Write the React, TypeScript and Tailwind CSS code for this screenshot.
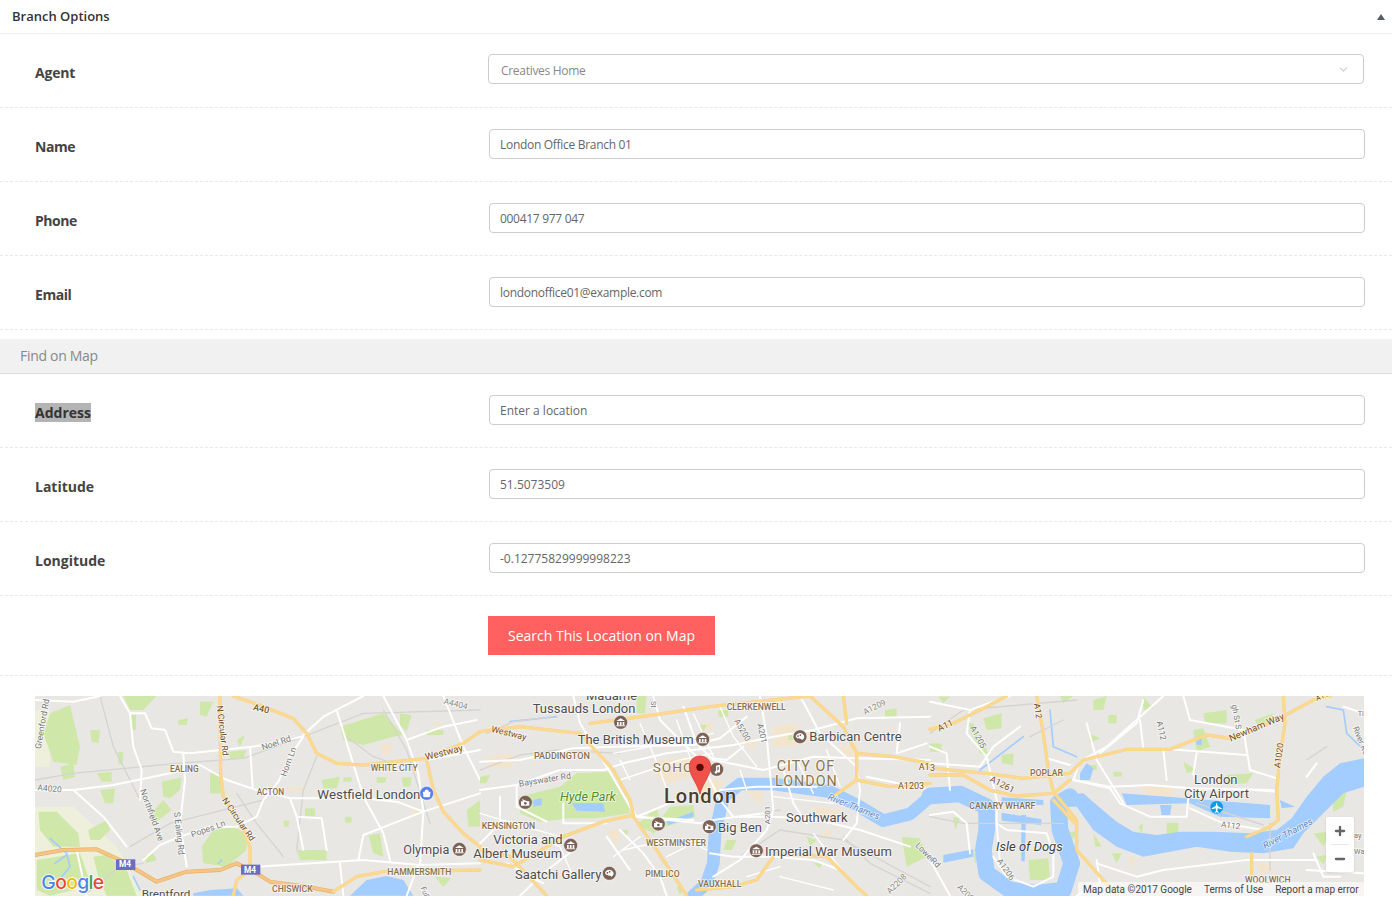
import React from 'react';
import { ChevronDown, Minus, Plus } from 'lucide-react';

const PARK = '#cfe8a9';
const WATER = '#a3ccff';
const TAN = '#f3e5cd';
const HIGHWAY = '#fcd98f';
const MOTORWAY = '#f7c583';

// every map shape below is written in 3x crop coordinates, one group per crop
type Panel = {
  x: number;
  pale: string[];
  parks: string[];
  tan: string[];
  water: string[];
  rivers: string[];
  streams: string[];
  minor: string[];
  roads: string[];
  fine: string[];
  highways: string[];
  motorways: string[];
};

const panels: Panel[] = [
  {
    x: 30,
    pale: ['15,350 130,350 260,470 340,617 15,617', '15,60 60,60 60,230 15,230'],
    parks: [
      '280,18 380,18 340,60 300,60',
      '60,70 120,45 150,170 140,225 70,215 40,130',
      '90,230 130,220 135,260 100,270',
      '300,75 318,75 318,120 302,120',
      '180,120 210,120 205,160 185,155',
      '265,185 280,185 278,225 265,220',
      '200,250 245,245 245,275 215,275',
      '395,275 455,262 450,300 420,325 400,320',
      '540,250 575,250 575,310 540,310',
      '210,300 255,295 250,340 225,340',
      '355,380 400,330 425,360 380,395',
      '510,35 550,35 530,80 510,75',
      '445,90 475,85 470,105 445,105',
      '620,150 645,135 630,170',
      '595,185 650,180 640,205 600,208',
      '930,110 1060,70 1120,135 1090,140 1000,165 940,150',
      '1110,70 1145,75 1130,125 1110,105',
      '875,270 930,260 920,295 880,295',
      '940,262 965,262 965,275 940,275',
      '1040,262 1070,262 1065,278 1040,278',
      '1115,262 1145,262 1140,290 1120,290',
      '1310,360 1350,330 1350,410 1315,410',
      '825,355 855,355 855,380 825,380',
      '945,380 965,380 965,398 945,398',
      '760,392 778,392 775,412 762,408',
      '1015,435 1050,430 1060,500 1030,490',
      '550,420 610,410 650,430 650,480 590,530 520,520 515,470',
      '800,480 890,480 890,510 810,510',
      '25,365 80,365 145,430 150,470 70,470 30,420',
      '175,420 230,390 240,420 210,450 180,450',
      '20,510 80,500 150,490 175,560 130,600 60,617 20,600',
      '190,500 230,495 290,540 320,617 230,617 205,560',
      '340,500 370,490 380,510 350,520',
      '1190,120 1240,120 1240,135 1190,135',
      '1215,560 1265,565 1240,590',
    ],
    tan: ['1050,165 1085,160 1085,190 1060,195', '770,295 825,292 825,302 770,306', '1145,350 1165,350 1165,380 1150,380', '1205,95 1240,100 1230,115'],
    water: ['960,617 1010,570 1070,558 1120,570 1150,617', '490,610 540,600 620,595 640,617 490,617'],
    rivers: [],
    streams: ['60,445 110,490 120,530 95,560', '110,495 75,520', '310,560 330,600', '575,510 565,520'],
    minor: [
      '15,270 130,250 420,222 640,205 820,140 1000,70 1350,60',
      '300,470 420,400 620,350 700,330',
      '620,310 680,400 760,500',
      '210,18 250,170 330,330',
      '1060,60 1130,180 1200,400',
      '860,200 820,300 800,480',
      '950,140 1030,200 1090,220',
      '170,610 270,530 340,520',
    ],
    roads: [
      '15,30 130,35 210,18',
      '270,18 300,70 345,70 365,115 405,120 430,185 480,190 665,170 700,165 815,140 880,80 1000,18',
      '300,70 310,170 335,240 330,330',
      '130,300 250,285 420,250 510,225 590,270 680,300 720,310 780,325 1000,325 1100,335 1180,365',
      '15,300 130,300 220,380 290,470',
      '460,190 465,270 450,400 470,530',
      '660,170 668,290',
      '820,140 780,200 745,275 700,330 680,380 620,410 540,410 450,440 390,465 340,510',
      '780,325 800,380 820,480',
      '800,380 875,385 890,480',
      '680,530 1000,510 1170,525 1350,520',
      '985,510 1000,435 1180,365 1350,310',
      '920,60 960,190 1000,320 1060,430 1080,510',
      '1060,18 1130,150 1165,250 1180,365 1170,525',
      '1240,18 1300,170 1350,270',
      '1130,150 1240,110 1340,90',
      '1165,525 1130,617',
      '1190,210 1350,180',
      '140,480 170,617',
      '930,520 940,617',
    ],
    fine: [],
    highways: [
      '610,18 700,50 790,85 830,130 860,190 920,220 1000,225 1190,205 1300,160 1350,125',
      '570,18 572,250 580,320 640,420 660,470 660,540 620,570 610,617',
      '1190,210 1210,300 1240,365 1300,430 1350,470',
      '910,605 980,560 1060,545 1350,540',
    ],
    motorways: ['15,495 100,480 200,478 270,510 380,575 470,545 570,540 620,520 680,550 720,575 830,590 910,605'],
  },
  {
    x: 480,
    pale: [],
    parks: [
      '240,290 290,250 390,245 440,330 450,370 350,385 270,385 180,395 120,370 115,320',
      '470,18 500,18 495,70 470,70',
      '470,405 530,350 540,390 570,350 640,345 645,380 560,410 520,430',
      '925,130 945,130 945,150 925,150',
      '715,60 745,60 745,80 715,80',
      '740,450 770,450 755,480 730,480',
      '0,260 30,255 20,280 0,280',
      '1215,60 1250,55 1250,80 1215,80',
      '1265,440 1320,445 1340,500 1280,530',
      '425,420 445,420 440,440',
      '980,440 1010,450 990,470',
      '1000,520 1030,515 1020,535',
      '590,590 610,590 600,617',
      '660,105 680,105 670,125',
    ],
    tan: [
      '530,210 640,200 650,250 570,280 530,260',
      '660,100 700,100 690,130',
      '650,270 730,270 710,330 640,340',
      '780,150 830,145 820,180',
      '880,110 950,100 950,170 880,170',
      '1080,170 1130,160 1140,205 1090,205',
      '1000,350 1080,360 1060,395 1000,395',
      '20,200 100,190 95,235 30,235',
      '380,420 420,420 410,470',
      '795,300 850,300 840,345',
      '1020,420 1060,420 1040,450',
    ],
    water: [
      '160,330 185,325 185,345 160,350',
      '275,340 370,340 375,365 290,362',
      '560,395 640,365 640,380 565,405',
    ],
    rivers: ['1350,320 1290,372 1210,392 1130,345 1050,305 880,282 780,282 730,320 705,430 700,520 680,580 640,617'],
    streams: ['90,95 230,80'],
    minor: [
      '0,240 120,195 230,180 420,190',
      '780,500 900,420 1090,450 1350,590',
      '780,380 900,360',
      '1090,440 1170,520 1350,610',
      '20,130 100,95 220,80',
    ],
    roads: [
      '0,300 110,285 240,240 370,240 430,220 560,190 760,165 880,140 1000,120 1130,85 1350,80',
      '0,215 120,210 280,175 400,170 640,165 720,145 800,80',
      '280,18 300,100 380,230 450,350 470,380 660,400 700,390 850,370',
      '520,18 540,90 660,210 720,330 760,380 860,380 990,385 1140,420 1290,470',
      '610,50 650,160 700,210 850,240 1000,200 1130,205 1350,210',
      '110,285 110,350 200,395',
      '60,320 60,400 0,460',
      '840,18 860,140 880,360 860,420 780,510 700,560',
      '960,18 1020,130 1130,230 1140,300 1130,400 1090,450',
      '1160,260 1350,300',
      '380,400 250,400 250,340',
      '420,420 490,490 540,560 560,617',
      '380,440 450,540',
      '690,490 760,500 880,500 1000,510 1080,540 1160,617',
      '720,300 830,290 1010,290',
      '910,240 940,340 980,400',
      '1260,100 1250,190 1340,160',
      '590,330 520,360 470,380',
      '280,480 190,550 120,617',
      '80,520 190,580',
      '700,205 740,210 790,170',
      '460,380 640,390',
    ],
    fine: [
      '400,190 560,160 700,130',
      '420,270 600,210 700,190',
      '480,100 540,240 560,300',
      '590,90 640,230 660,290',
      '640,70 700,200',
      '420,210 450,270',
      '720,50 760,140 830,230',
      '780,240 800,300',
      '950,210 1000,310',
      '1040,180 1080,290',
      '880,320 1060,340',
      '430,480 560,450',
      '400,500 480,440',
      '1000,430 1100,560',
      '900,560 1060,600',
      '800,560 900,530',
      '560,500 640,460 680,480',
      '150,440 240,470 280,560',
      '0,370 100,400 240,440',
    ],
    highways: [
      '0,125 120,110 300,130',
      '330,100 520,75 690,50 830,35 990,18',
      '300,130 400,240 450,330 460,375 370,395 250,440 100,530 0,510',
      '460,380 530,480 620,617',
      '990,18 1090,110 1130,190 1130,270 1060,320',
      '1130,190 1240,200 1350,220',
      '1130,270 1230,290 1350,280',
      '880,490 1040,500 1130,590 1160,617',
      '880,500 830,570 760,590 650,600',
      '1090,18 1100,100',
      '0,480 90,500 200,617',
    ],
    motorways: [],
  },
  {
    x: 930,
    pale: [],
    parks: [
      '490,30 530,18 520,60 490,60',
      '640,20 670,55 640,60',
      '535,75 560,75 560,100 535,100',
      '160,85 215,70 215,115 170,120',
      '475,130 510,145 480,160',
      '790,120 820,115 840,170 800,185',
      '820,70 890,60 890,100 825,100',
      '975,90 1030,70 1020,105 985,115',
      '215,195 250,190 250,225 215,220',
      '0,160 35,160 35,185 0,185',
      '110,100 130,100 180,200 150,190',
      '550,245 575,245 575,260 550,260',
      '760,215 800,240 770,250',
      '890,255 970,250 950,280 890,285',
      '475,225 500,225 500,240 480,240',
      '710,398 745,398 745,430 710,430',
      '625,410 640,400 635,430',
      '490,430 515,470 495,470',
      '295,510 355,505 360,570 300,570',
      '408,425 440,425 430,450',
      '70,380 90,385 75,420',
      '1205,310 1250,300 1240,350 1210,365',
      '1150,430 1200,425 1180,470',
      '1160,500 1190,495 1180,525',
      '25,20 60,20 40,40',
      '390,18 430,18 400,40',
      '545,490 575,490 560,520',
      '130,490 150,495 135,520',
    ],
    tan: ['630,290 730,290 725,320 650,320', '980,520 1020,520 1030,545 990,550', '595,500 615,500 605,540'],
    water: [
      '1302,205 1230,220 1180,260 1130,320 1085,385 1040,420 960,430 850,425 750,425 680,435 610,425 560,395 500,345 460,310 400,315 400,350 440,350 490,420 560,470 640,500 800,470 900,485 1000,490 1090,475 1120,430 1180,370 1240,310 1302,290',
      '575,310 770,325 1020,345 1020,385 870,380 780,340 590,345',
      '690,345 725,345 720,375 695,375',
      '1050,330 1095,350 1055,355',
      '215,322 340,330 340,345 215,340',
      '215,368 335,388 333,405 215,392',
      '274,375 288,375 284,515 274,512',
      '40,495 130,478 130,500 40,518',
      '450,250 470,220 490,235 480,270 450,270',
      '800,145 815,145 815,165 800,165',
    ],
    rivers: ['0,318 90,312 170,350 170,420 160,480 170,550 240,600 320,610 400,600 425,520 390,420 385,340 420,320'],
    streams: ['360,60 370,170 440,200', '1190,50 1240,60 1250,130 1302,180', '150,240 280,140'],
    minor: [
      '0,130 100,60 440,30',
      '400,90 300,140',
      '0,380 100,400 400,400',
      '800,340 1000,405',
      '1020,400 1020,540',
      '1130,210 1190,170',
    ],
    roads: [
      '0,35 120,60 240,18',
      '120,60 110,130 170,200 200,330 200,400 230,420 350,430 370,490 370,560 310,590 230,560 190,500',
      '270,110 190,170 150,230 0,220',
      '0,170 50,190 60,300',
      '700,18 530,170 450,215 430,270 540,295 570,340 660,380 770,380 775,320',
      '430,270 540,290 660,285 780,295 1030,300',
      '780,355 880,400 1000,420',
      '630,90 640,175',
      '700,180 710,270',
      '470,100 500,210 580,340',
      '640,30 620,100 510,190',
      '760,18 780,90 940,120 960,240 1040,265',
      '720,178 950,195',
      '800,190 790,250 800,280',
      '500,520 620,560 700,540 950,510 1160,510',
      '500,510 510,580 440,617',
      '0,375 70,365 110,400 120,490',
      '0,510 60,617',
      '200,400 210,520',
      '1130,540 1300,550',
      '1150,490 1180,560 1230,560',
      '1160,220 1130,260',
      '350,205 420,225',
      '1240,50 1302,70',
      '970,300 1040,305',
    ],
    fine: [],
    highways: [
      '0,118 70,100 170,50 230,18',
      '320,18 340,130 355,240 370,305 440,390 440,480 520,570 560,617',
      '0,232 60,240 170,250 280,265 420,250 460,210 590,178 720,178 830,135 900,145 1050,85 1150,30 1200,18',
      '0,255 100,255 180,300 260,318 370,310 420,270',
      '1060,18 1065,100 1050,200 1040,300 1045,390 1020,410 950,440',
      '965,490 965,560',
      '370,330 435,400',
    ],
    motorways: [],
  },
];

type LabelProps = {
  x: number;
  y: number;
  s: number;
  c?: string;
  r?: number;
  w?: number;
  i?: boolean;
  sp?: number;
  children: string;
};

function Label({ x, y, s, c = '#5c5c5c', r = 0, w = 400, i = false, sp = 0, children }: LabelProps) {
  return (
    <text
      x={x}
      y={y}
      fontSize={s}
      fill={c}
      fontWeight={w}
      fontStyle={i ? 'italic' : 'normal'}
      letterSpacing={sp}
      stroke="#ffffff"
      strokeOpacity={0.7}
      strokeWidth={5}
      paintOrder="stroke"
      transform={r ? `rotate(${r} ${x} ${y})` : undefined}
    >
      {children}
    </text>
  );
}

function Poi({ x, y, kind = 'museum', c = '#7b6156' }: { x: number; y: number; kind?: string; c?: string }) {
  return (
    <g transform={`translate(${x} ${y})`}>
      <circle r={21} fill={c} stroke="#ffffff" strokeOpacity={0.6} strokeWidth={3} />
      {kind === 'museum' && <path d="M-13 -4 L0 -12 L13 -4 Z M-11 -1 H-6 V8 H-11 Z M-2.5 -1 H2.5 V8 H-2.5 Z M6 -1 H11 V8 H6 Z M-13 9 H13 V12 H-13 Z" fill="#fff" />}
      {kind === 'photo' && (
        <>
          <path d="M-13 -3 H-7 L-10 -10 L-2 -6 L6 -3 H12 V10 H-13 Z" fill="#fff" />
          <circle cx="0" cy="3" r="4" fill={c} />
        </>
      )}
      {kind === 'music' && <path d="M-2 -11 L10 -14 V6 A4 4 0 1 1 6 2 V-8 L2 -7 V9 A4 4 0 1 1 -2 5 Z" fill="#fff" />}
      {kind === 'shop' && <path d="M-11 -4 H11 L9 11 H-9 Z M-6 -4 A6 7 0 0 1 6 -4" fill="#fff" stroke="#fff" strokeWidth={1} />}
      {kind === 'art' && <path d="M-13 -1 A13 11 0 1 1 6 10 C2 3 -7 12 -13 -1 Z M-6 -4 A2.5 2.5 0 1 0 -5.9 -4 M1 -7 A2.5 2.5 0 1 0 1.1 -7" fill="#fff" />}
    </g>
  );
}

function MapArt() {
  return (
    <svg viewBox="35 696 1329 200" className="block h-full w-full" fontFamily="Roboto, sans-serif">
      <rect x="35" y="696" width="1329" height="200" fill="#e9e7e4" />
      <g className="blur-[0.35px]">
        {panels.map((p) => (
          <g key={p.x} transform={`translate(${p.x} 690) scale(0.33334)`} strokeLinejoin="round" strokeLinecap="round" fill="none">
            {p.pale.map((d) => <polygon key={d} points={d} fill="#eef0dc" />)}
            {p.tan.map((d) => <polygon key={d} points={d} fill={TAN} />)}
            {p.parks.map((d) => <polygon key={d} points={d} fill={PARK} />)}
            {p.water.map((d) => <polygon key={d} points={d} fill={WATER} />)}
            {p.rivers.map((d) => <polyline key={d} points={d} stroke={WATER} strokeWidth={p.x === 930 ? 50 : 38} />)}
            {p.streams.map((d) => <polyline key={d} points={d} stroke={WATER} strokeWidth={5} />)}
            {p.minor.map((d) => <polyline key={d} points={d} stroke="#d6d4d0" strokeWidth={4} />)}
            {p.fine.map((d) => <polyline key={d} points={d} stroke="#ffffff" strokeWidth={4} />)}
            {p.roads.map((d) => <polyline key={d} points={d} stroke="#ffffff" strokeWidth={6} />)}
            {p.motorways.map((d) => <polyline key={d} points={d} stroke="#e6b06a" strokeWidth={12} />)}
            {p.motorways.map((d) => <polyline key={d} points={d} stroke={MOTORWAY} strokeWidth={8} />)}
            {p.highways.map((d) => <polyline key={d} points={d} stroke="#f2d08a" strokeWidth={10} />)}
            {p.highways.map((d) => <polyline key={d} points={d} stroke={HIGHWAY} strokeWidth={8} />)}
          </g>
        ))}
      </g>

      <g transform="translate(30 691) scale(0.33334)">
        <Label x={668} y={56} s={27} c="#7a5a22" r={14} w={500}>A40</Label>
        <Label x={1240} y={38} s={25} c="#8a8a8a" r={14}>A4404</Label>
        <Label x={32} y={175} s={26} c="#777" r={-80}>Greenford Rd</Label>
        <Label x={560} y={45} s={26} c="#6e4a1a" r={83}>N Circular Rd</Label>
        <Label x={698} y={178} s={26} c="#777" r={-18}>Noel Rd</Label>
        <Label x={768} y={258} s={26} c="#777" r={-70}>Horn Ln</Label>
        <Label x={420} y={243} s={25} c="#86704f" w={500}>EALING</Label>
        <Label x={1022} y={240} s={26} c="#86704f" w={500}>WHITE CITY</Label>
        <Label x={1188} y={208} s={29} c="#7a4d12" r={-14}>Westway</Label>
        <Label x={22} y={298} s={25} c="#777" r={5}>A4020</Label>
        <Label x={680} y={311} s={25} c="#86704f" w={500}>ACTON</Label>
        <Label x={862} y={325} s={40} c="#4e4e4e">Westfield London</Label>
        <Label x={330} y={298} s={26} c="#777" r={70}>Northfield Ave</Label>
        <Label x={432} y={364} s={26} c="#777" r={84}>S Ealing Rd</Label>
        <Label x={487} y={440} s={26} c="#777" r={-20}>Popes Ln</Label>
        <Label x={575} y={328} s={26} c="#6e4a1a" r={55}>N Circular Rd</Label>
        <Label x={1120} y={490} s={38} c="#4e4e4e">Olympia</Label>
        <Label x={1072} y={551} s={26} c="#86704f" w={500}>HAMMERSMITH</Label>
        <Label x={726} y={603} s={26} c="#86704f" w={500}>CHISWICK</Label>
        <Label x={335} y={620} s={35} c="#4e4e4e">Brentford</Label>
        <Label x={1172} y={590} s={22} c="#777" r={70}>Fulh</Label>
        <rect x="258" y="505" width="58" height="32" fill="#6d6bc4" />
        <text x="267" y="529" fontSize="25" fontWeight={700} fill="#fff">M4</text>
        <rect x="633" y="521" width="58" height="30" fill="#6d6bc4" />
        <text x="642" y="545" fontSize="25" fontWeight={700} fill="#fff">M4</text>
        <Poi x={1190} y={307} kind="shop" c="#5b7fe8" />
        <Poi x={1288} y={475} />
        <text x="34" y="594" fontSize="58" fontWeight={500} fontFamily="Inter, sans-serif" letterSpacing={-2} stroke="#ffffff" strokeWidth={5} paintOrder="stroke">
          <tspan fill="#4a86e8">G</tspan><tspan fill="#e8483a">o</tspan><tspan fill="#f6b900">o</tspan><tspan fill="#4a86e8">g</tspan><tspan fill="#38a852">l</tspan><tspan fill="#e8483a">e</tspan>
        </text>
      </g>

      <g transform="translate(480 691) scale(0.33334)">
        <Label x={318} y={28} s={39} c="#4e4e4e">Madame</Label>
        <Label x={158} y={66} s={39} c="#4e4e4e">Tussauds London</Label>
        <Label x={514} y={30} s={22} c="#777" r={90}>St</Label>
        <Label x={740} y={57} s={26} c="#86704f" w={500}>CLERKENWELL</Label>
        <Label x={1155} y={72} s={25} c="#888" r={-27}>A1209</Label>
        <Label x={32} y={122} s={27} c="#7a4d12" r={14}>Westway</Label>
        <Label x={293} y={159} s={39} c="#4e4e4e">The British Museum</Label>
        <Label x={762} y={90} s={25} c="#777" r={60}>A5200</Label>
        <Label x={832} y={100} s={25} c="#777" r={78}>A201</Label>
        <Label x={988} y={150} s={39} c="#4e4e4e">Barbican Centre</Label>
        <Label x={162} y={203} s={27} c="#86704f" w={500}>PADDINGTON</Label>
        <Label x={518} y={244} s={41} c="#8a7550" sp={3}>SOHO</Label>
        <Label x={890} y={240} s={43} c="#8a7550" sp={3}>CITY OF</Label>
        <Label x={885} y={284} s={43} c="#8a7550" sp={3}>LONDON</Label>
        <Label x={1316} y={236} s={27} c="#7a4d12">A1</Label>
        <Label x={1254} y={293} s={27} c="#7a4d12">A1203</Label>
        <Label x={118} y={287} s={26} c="#777" r={-9}>Bayswater Rd</Label>
        <Label x={240} y={330} s={38} c="#4f8f29" i>Hyde Park</Label>
        <Label x={552} y={336} s={60} c="#4a3f30" w={500} sp={3}>London</Label>
        <Label x={1042} y={325} s={28} c="#5b87bd" r={22} i>River Thames</Label>
        <Label x={918} y={393} s={39} c="#4e4e4e">Southwark</Label>
        <Label x={5} y={414} s={26} c="#86704f" w={500}>KENSINGTON</Label>
        <Label x={40} y={458} s={39} c="#4e4e4e">Victoria and</Label>
        <Label x={-20} y={500} s={39} c="#4e4e4e">Albert Museum</Label>
        <Label x={714} y={423} s={39} c="#4e4e4e">Big Ben</Label>
        <Label x={870} y={400} s={24} c="#777" r={-90}>A201</Label>
        <Label x={498} y={465} s={26} c="#86704f" w={500}>WESTMINSTER</Label>
        <Label x={855} y={495} s={39} c="#4e4e4e">Imperial War Museum</Label>
        <Label x={105} y={564} s={39} c="#4e4e4e">Saatchi Gallery</Label>
        <Label x={496} y={558} s={26} c="#86704f" w={500}>PIMLICO</Label>
        <Label x={654} y={588} s={26} c="#86704f" w={500}>VAUXHALL</Label>
        <Label x={1305} y={465} s={25} c="#777" r={45}>Lower</Label>
        <Label x={1230} y={610} s={25} c="#888" r={-45}>A2208</Label>
        <Poi x={422} y={94} />
        <Poi x={668} y={145} />
        <Poi x={960} y={137} kind="art" />
        <Poi x={710} y={235} kind="music" />
        <Poi x={136} y={334} kind="photo" />
        <Poi x={535} y={399} kind="photo" />
        <Poi x={688} y={407} kind="photo" />
        <Poi x={272} y={463} />
        <Poi x={829} y={479} />
        <Poi x={388} y={547} kind="art" />
        <path d="M660 195 C682 195 692 211 692 227 C692 253 668 277 660 309 C652 277 628 253 628 227 C628 211 638 195 660 195 Z" fill="#f0524b" stroke="#c9352e" strokeWidth={2} />
        <circle cx="660" cy="229" r="11" fill="#5a0b08" />
      </g>

      <g transform="translate(930 691) scale(0.33334)">
        <Label x={28} y={122} s={27} c="#7a4d12" r={-25}>A11</Label>
        <Label x={120} y={110} s={25} c="#777" r={62}>A1205</Label>
        <Label x={312} y={38} s={26} c="#6e4a1a" r={82}>A12</Label>
        <Label x={680} y={92} s={25} c="#777" r={78}>A112</Label>
        <Label x={905} y={42} s={24} c="#777" r={80}>gh St S</Label>
        <Label x={902} y={152} s={29} c="#7a4d12" r={-23}>Newham Way</Label>
        <Label x={1050} y={232} s={26} c="#7a4d12" r={-82}>A1020</Label>
        <Label x={1160} y={30} s={22} c="#7a4d12" r={-20}>A11</Label>
        <Label x={1283} y={75} s={22} c="#777">Tl</Label>
        <Label x={1268} y={110} s={25} c="#777" r={68}>River Ro</Label>
        <Label x={300} y={254} s={26} c="#86704f" w={500}>POPLAR</Label>
        <Label x={0} y={240} s={27} c="#7a4d12">3</Label>
        <Label x={178} y={270} s={27} c="#7a4d12" r={28}>A1261</Label>
        <Label x={118} y={354} s={26} c="#86704f" w={500}>CANARY WHARF</Label>
        <Label x={792} y={280} s={39} c="#4e4e4e">London</Label>
        <Label x={762} y={320} s={39} c="#4e4e4e">City Airport</Label>
        <Label x={872} y={408} s={25} c="#777" r={7}>A112</Label>
        <Label x={198} y={480} s={39} c="#3e3e3e" i>Isle of Dogs</Label>
        <Label x={1005} y={474} s={28} c="#5b87bd" r={-28} i>River Thames</Label>
        <Label x={200} y={510} s={25} c="#777" r={55}>A1206</Label>
        <Label x={0} y={510} s={25} c="#777" r={45}>Rd</Label>
        <Label x={80} y={590} s={25} c="#888" r={45}>A209</Label>
        <Label x={945} y={576} s={26} c="#86704f" w={500}>WOOLWICH</Label>
        <Label x={1272} y={442} s={22} c="#777">ay</Label>
        <Label x={1272} y={490} s={22} c="#777">Wa</Label>
        <circle cx="860" cy="349" r="19" fill="#0b9be3" />
        <path d="M860 333 L863 345 L875 352 V355 L863 352 L862 360 L866 364 V366 L860 364 L854 366 V364 L858 360 L857 352 L845 355 V352 L857 345 Z" fill="#fff" />
      </g>
    </svg>
  );
}

function Row({ label, value, placeholder, selected, tight }: { label: string; value?: string; placeholder?: string; selected?: boolean; tight?: boolean }) {
  return (
    <div className="flex h-[74px] border-b border-dashed border-[#e8e8e8] pl-[35px] pr-[27px] pt-[21px]">
      <div className={`mt-[8px] w-[454px] text-[14px] font-bold leading-[19px] text-[#444] ${tight ? 'tracking-[-0.45px]' : ''}`}>
        <span className={selected ? 'bg-[#b4b4b4] text-[#333]' : ''}>{label}</span>
      </div>
      <input
        readOnly
        value={value ?? ''}
        placeholder={placeholder}
        className={`h-[30px] flex-1 rounded-[4px] border border-[#ccc] bg-white px-[10px] text-[12px] text-[#666] outline-none placeholder:text-[#666] ${tight ? 'tracking-[-0.3px]' : ''}`}
      />
    </div>
  );
}

export default function App(): React.ReactNode {
  return (
    <div className="h-[899px] overflow-hidden bg-white font-['Open_Sans',sans-serif] text-[#444]">
      <header className="flex h-[34px] items-center justify-between border-b border-[#eee] pl-3 pr-[7px]">
        <h2 className="text-[13px] font-semibold text-[#333]">Branch Options</h2>
        <svg width="8" height="6" viewBox="0 0 8 6" className="mt-[1px]">
          <path d="M4 0 L8 6 H0 Z" fill="#555d66" />
        </svg>
      </header>

      <div className="flex h-[74px] border-b border-dashed border-[#e8e8e8] pl-[35px] pr-[28px]">
        <div className="mt-[29px] w-[453px] text-[14px] font-bold leading-[19px] tracking-[-0.2px] text-[#444]">Agent</div>
        <div className="mt-5 flex h-[30px] flex-1 items-center justify-between rounded-[4px] border border-[#ccc] pl-3 pr-[13px] text-[12px] tracking-[-0.3px] text-[#888]">
          <span className="mt-[3px]">Creatives Home</span>
          <ChevronDown className="h-[13px] w-[13px] text-[#ccc]" />
        </div>
      </div>
      <Row label="Name" value="London Office Branch 01" tight />
      <Row label="Phone" value="000417 977 047" tight />
      <Row label="Email" value="londonoffice01@example.com" tight />

      <div className="mt-[9px] flex h-[35px] items-center border-b border-[#ddd] bg-[#f1f1f1] pb-[2px] pl-5 text-[14px] tracking-[-0.3px] text-[#888]">Find on Map</div>

      <Row label="Address" placeholder="Enter a location" selected />
      <Row label="Latitude" value="51.5073509" />
      <Row label="Longitude" value="-0.12775829999998223" />

      <div className="h-[80px] border-b border-dashed border-[#e8e8e8] pl-[488px] pt-5">
        <button className="h-[39px] w-[227px] bg-[#ff6060] text-[14px] text-white">Search This Location on Map</button>
      </div>

      <div className="relative ml-[35px] mr-[28px] mt-5 h-[200px]">
        <MapArt />
        <div className="absolute right-[10px] top-[121px] flex h-[55px] w-[28px] flex-col items-center rounded-[2px] bg-white shadow-sm">
          <div className="flex h-[27px] w-full items-center justify-center"><Plus className="h-[14px] w-[14px] text-[#666]" strokeWidth={4} /></div>
          <div className="h-px w-[18px] bg-[#e6e6e6]" />
          <div className="flex h-[27px] w-full items-center justify-center"><Minus className="h-[14px] w-[14px] text-[#666]" strokeWidth={4} /></div>
        </div>
        <div className="absolute bottom-0 right-0 flex h-[14px] w-[286px] items-center gap-3 bg-white/60 pl-[5px] font-['Roboto',sans-serif] text-[10px] text-[#444]">
          <span>Map data ©2017 Google</span>
          <span>Terms of Use</span>
          <span>Report a map error</span>
        </div>
      </div>
    </div>
  );
}
